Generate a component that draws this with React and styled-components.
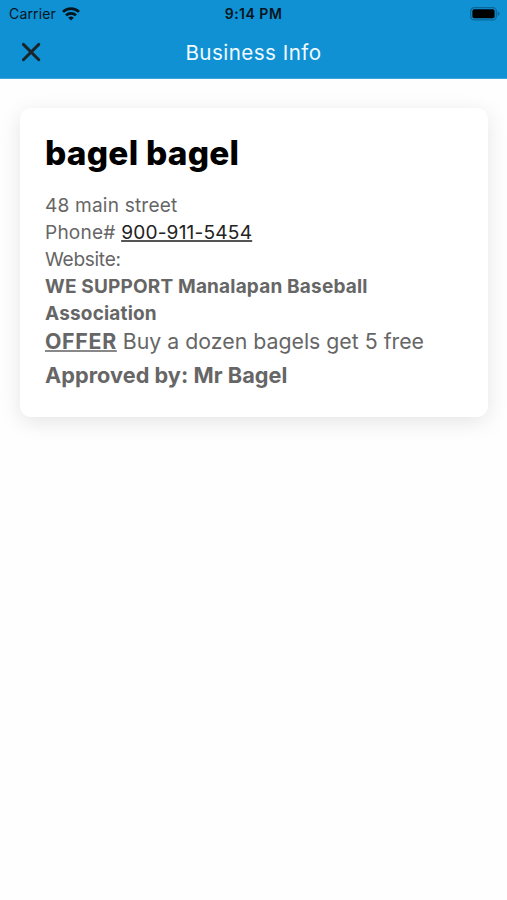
import React from "react";
import styled, { createGlobalStyle } from "styled-components";

const App = () => {
  return (
    <>
      <GlobalStyle />
      <Screen>
        <Header>
          <StatusBar>
            <Carrier>
              <span>Carrier</span>
              <WifiIcon />
            </Carrier>
            <Time>9:14 PM</Time>
            <BatteryIcon />
          </StatusBar>
          <Toolbar>
            <CloseButton type="button" aria-label="Close">
              <CloseIcon />
            </CloseButton>
            <Title>Business Info</Title>
          </Toolbar>
        </Header>
        <Content>
          <Card>
            <BusinessName>bagel bagel</BusinessName>
            <Line $spacing="0.18px">48 main street</Line>
            <Line $spacing="0.19px">
              Phone# <PhoneLink href="tel:900-911-5454">900-911-5454</PhoneLink>
            </Line>
            <Line $spacing="-0.3px">Website:</Line>
            <Support>WE SUPPORT Manalapan Baseball Association</Support>
            <Offer>
              <OfferLabel>OFFER</OfferLabel> Buy a dozen bagels get 5 free
            </Offer>
            <Approved>Approved by: Mr Bagel</Approved>
          </Card>
        </Content>
      </Screen>
    </>
  );
};

const WifiIcon = () => (
  <svg width="18" height="14" viewBox="0 0 18 14" fill="none" stroke="#04141d" strokeWidth="2.6">
    <path d="M1 4.9a11.4 11.4 0 0 1 16 0" />
    <path d="M4 8.4a7.1 7.1 0 0 1 10 0" />
    <path d="M9 13.6 6.2 10.8a4 4 0 0 1 5.6 0z" fill="#04141d" stroke="none" />
  </svg>
);

const BatteryIcon = () => (
  <svg width="30" height="14" viewBox="0 0 30 14">
    <rect x="0.7" y="0.7" width="25.6" height="12.2" rx="3.6" fill="none" stroke="#0b679a" strokeWidth="1.3" />
    <rect x="2.4" y="2.3" width="22.2" height="9" rx="2" fill="#000000" />
    <path d="M27.6 4.6c1.6.5 2 1.3 2 2.2s-.4 1.7-2 2.2z" fill="#0b679a" />
  </svg>
);

const CloseIcon = () => (
  <svg width="20" height="20" viewBox="0 0 20 20" fill="none" stroke="#1b2428" strokeWidth="2.9" strokeLinecap="round">
    <path d="M2.4 2.4 17.8 17.8M17.8 2.4 2.4 17.8" />
  </svg>
);

export default App;

const GlobalStyle = createGlobalStyle`
  body {
    margin: 0;
    background-color: #ffffff;
  }
`;

const Screen = styled.div`
  min-height: 900px;
  background-color: #fefefe;
  font-family: Inter, Roboto, sans-serif;
  color: #666666;
`;

const Header = styled.header`
  box-sizing: border-box;
  height: 79px;
  background-color: #0f91d3;
  border-bottom: 1px solid #3ba5db;
`;

const StatusBar = styled.div`
  display: grid;
  grid-template-columns: 1fr auto 1fr;
  align-items: center;
  height: 27px;
  padding: 0 7px 0 9px;
  font-size: 14px;
  color: #04141d;

  > svg {
    justify-self: end;
  }
`;

const Carrier = styled.div`
  display: flex;
  align-items: center;
  gap: 6px;
  letter-spacing: 0.15px;
`;

const Time = styled.span`
  margin-right: 2px;
  font-size: 14px;
  font-weight: 600;
  letter-spacing: 0.5px;
`;

const Toolbar = styled.div`
  display: grid;
  grid-template-columns: 62px 1fr 62px;
  align-items: center;
  height: 50px;
`;

const CloseButton = styled.button`
  display: flex;
  justify-content: center;
  padding: 0;
  border: none;
  background: none;
`;

const Title = styled.h1`
  margin: 0;
  text-align: center;
  font-size: 20.6px;
  font-weight: 400;
  letter-spacing: 0.45px;
  color: #f0faff;
`;

const Content = styled.main`
  padding: 29px 19px 0 20px;
`;

const Card = styled.section`
  box-sizing: border-box;
  height: 309px;
  padding: 23px 25px;
  border-radius: 11px;
  background-color: #ffffff;
  box-shadow: 0 5px 21px rgba(0, 0, 0, 0.1);
`;

const BusinessName = styled.h2`
  margin: 0 0 17px;
  font-size: 33.4px;
  line-height: 44px;
  font-weight: 800;
  letter-spacing: 0.25px;
  color: #000000;
`;

const Line = styled.p`
  margin: 0;
  font-size: 19.1px;
  line-height: 27px;
  letter-spacing: ${({ $spacing }) => $spacing};
`;

const PhoneLink = styled.a`
  color: #222222;
  text-decoration: underline;
  text-decoration-color: #555555;
  text-decoration-thickness: 2px;
  text-underline-offset: 1px;
`;

const Support = styled.p`
  margin: 0;
  width: 360px;
  font-size: 19px;
  line-height: 27px;
  font-weight: 700;
  letter-spacing: 0.18px;
`;

const Offer = styled.p`
  margin: 0;
  font-size: 21.3px;
  line-height: 29px;
  letter-spacing: 0;
  white-space: nowrap;
`;

const OfferLabel = styled.strong`
  letter-spacing: 0.7px;
  text-decoration: underline;
  text-decoration-color: #888888;
  text-decoration-thickness: 2px;
  text-underline-offset: 1px;
`;

const Approved = styled.p`
  margin: 2px 0 0;
  font-size: 21.7px;
  line-height: 34px;
  font-weight: 700;
  letter-spacing: 0.05px;
`;
